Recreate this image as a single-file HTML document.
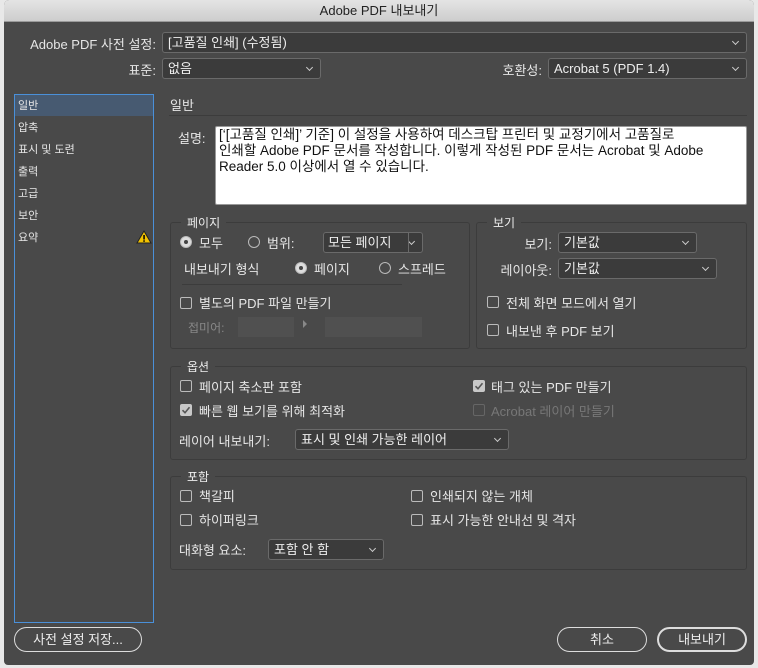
<!DOCTYPE html>
<html><head><meta charset="utf-8"><style>
*{box-sizing:border-box;margin:0;padding:0}
body{width:758px;height:668px;background:#e8e8e8;position:relative;overflow:hidden;font-family:"Liberation Sans","Noto Sans CJK KR","NanumGothic",sans-serif;font-size:12px;color:#e6e6e6}
.a{position:absolute;white-space:nowrap}
.r{position:absolute;white-space:nowrap;text-align:right}
#win{position:absolute;left:4px;top:0;width:750px;height:665px;background:#494949;border-radius:5px 5px 4px 4px;overflow:hidden}
#title{position:absolute;left:0;top:0;width:750px;height:22px;background:linear-gradient(#e4e4e4,#cdcdcd);border-bottom:1px solid #9a9a9a;color:#222;text-align:center;line-height:22px;font-size:13px}
.sel{position:absolute;height:21px;background:#3b3b3b;border:1px solid #6a6a6a;border-radius:3px;color:#eee;font-size:13px;line-height:19px;padding-left:5px}
.sel:after{content:"";position:absolute;right:8px;top:6px;width:4px;height:4px;border-right:1px solid #ccc;border-bottom:1px solid #ccc;transform:rotate(45deg)}
.fs{position:absolute;border:1px solid #3c3c3c;border-radius:3px}
.lg{position:absolute;background:#494949;padding:0 6px;font-size:12px;top:-9px;left:10px;color:#eee}
.cb{position:absolute;width:12px;height:12px;border:1px solid #bbb;border-radius:2px}
.ck{position:absolute;width:12px;height:12px;border-radius:2px;background:#c8c8c8}
.ck svg{position:absolute;left:0;top:0}
.rd{position:absolute;width:12px;height:12px;border:1px solid #bbb;border-radius:50%}
.rd.on:after{content:"";position:absolute;left:3px;top:3px;width:4px;height:4px;border-radius:50%;background:#444}
.rd.on{background:#ddd}
.btn{position:absolute;height:25px;border:1px solid #ddd;border-radius:13px;text-align:center;line-height:23px;font-size:13px;color:#eee}
.li{position:absolute;left:3px;font-size:11px}
</style></head><body>
<div id="win">
<div id="title">Adobe PDF 내보내기</div>
<div class="r" style="left:0;width:152px;top:34px;font-size:13px">Adobe PDF 사전 설정:</div>
<div class="sel" style="left:158px;top:32px;width:585px">[고품질 인쇄] (수정됨)</div>
<div class="r" style="left:0;width:152px;top:60px;font-size:13px">표준:</div>
<div class="sel" style="left:158px;top:58px;width:159px">없음</div>
<div class="r" style="left:400px;width:138px;top:60px;font-size:13px">호환성:</div>
<div class="sel" style="left:544px;top:58px;width:199px">Acrobat 5 (PDF 1.4)</div>

<div style="position:absolute;left:10px;top:94px;width:140px;height:529px;border:1px solid #4a90d9;background:#494949">
<div style="position:absolute;left:0;top:0;width:138px;height:21px;background:#475a71"></div>
<div class="li" style="top:2px">일반</div>
<div class="li" style="top:24px">압축</div>
<div class="li" style="top:46px">표시 및 도련</div>
<div class="li" style="top:68px">출력</div>
<div class="li" style="top:90px">고급</div>
<div class="li" style="top:112px">보안</div>
<div class="li" style="top:134px">요약</div>
<svg style="position:absolute;left:121px;top:135px" width="16" height="14"><path d="M8 1L15 13H1Z" fill="#f2c200" stroke="#222" stroke-width="1"/><rect x="7.3" y="5" width="1.5" height="4.5" fill="#000"/><rect x="7.3" y="10.3" width="1.5" height="1.5" fill="#000"/></svg>
</div>

<div class="a" style="left:166px;top:95px;font-size:13px">일반</div>
<div style="position:absolute;left:165px;top:115px;width:578px;height:1px;background:#3c3c3c"></div>
<div class="a" style="left:174px;top:128px;font-size:13px">설명:</div>
<div style="position:absolute;left:211px;top:126px;width:532px;height:79px;background:#fff;border:1px solid #999;border-radius:2px;color:#111;font-size:13.5px;line-height:16px;padding:0 3px;white-space:nowrap;overflow:hidden">[‘[고품질 인쇄]’ 기준] 이 설정을 사용하여 데스크탑 프린터 및 교정기에서 고품질로<br>인쇄할 Adobe PDF 문서를 작성합니다. 이렇게 작성된 PDF 문서는 Acrobat 및 Adobe<br>Reader 5.0 이상에서 열 수 있습니다.</div>

<div class="fs" style="left:166px;top:222px;width:300px;height:127px"><div class="lg">페이지</div></div>
<div class="rd on" style="left:176px;top:236px"></div><div class="a" style="left:195px;top:233px;font-size:13px">모두</div>
<div class="rd" style="left:244px;top:236px"></div><div class="a" style="left:263px;top:233px;font-size:13px">범위:</div>
<div class="sel" style="left:319px;top:232px;width:100px;padding-left:4px">모든 페이지</div>
<div style="position:absolute;left:404px;top:233px;width:1px;height:19px;background:#6a6a6a"></div>
<div class="a" style="left:180px;top:259px;font-size:13px">내보내기 형식</div>
<div class="rd on" style="left:291px;top:262px"></div><div class="a" style="left:310px;top:259px;font-size:13px">페이지</div>
<div class="rd" style="left:375px;top:262px"></div><div class="a" style="left:394px;top:259px;font-size:13px">스프레드</div>
<div style="position:absolute;left:178px;top:284px;width:220px;height:1px;background:#3c3c3c"></div>
<div class="cb" style="left:176px;top:297px"></div><div class="a" style="left:195px;top:293px;font-size:13px">별도의 PDF 파일 만들기</div>
<div class="a" style="left:184px;top:319px;font-size:12px;color:#888">접미어:</div>
<div style="position:absolute;left:234px;top:317px;width:56px;height:20px;background:#505050"></div>
<div style="position:absolute;left:299px;top:320px;width:0;height:0;border-left:4px solid #888;border-top:4px solid transparent;border-bottom:4px solid transparent"></div>
<div style="position:absolute;left:321px;top:317px;width:97px;height:20px;background:#505050"></div>

<div class="fs" style="left:472px;top:222px;width:271px;height:127px"><div class="lg">보기</div></div>
<div class="r" style="left:450px;width:98px;top:234px;font-size:13px">보기:</div>
<div class="sel" style="left:554px;top:232px;width:139px">기본값</div>
<div class="r" style="left:450px;width:98px;top:260px;font-size:13px">레이아웃:</div>
<div class="sel" style="left:554px;top:258px;width:159px">기본값</div>
<div class="cb" style="left:483px;top:296px"></div><div class="a" style="left:502px;top:293px;font-size:13px">전체 화면 모드에서 열기</div>
<div class="cb" style="left:483px;top:324px"></div><div class="a" style="left:502px;top:321px;font-size:13px">내보낸 후 PDF 보기</div>

<div class="fs" style="left:166px;top:366px;width:577px;height:94px"><div class="lg">옵션</div></div>
<div class="cb" style="left:176px;top:380px"></div><div class="a" style="left:195px;top:377px;font-size:13px">페이지 축소판 포함</div>
<div class="ck" style="left:176px;top:404px"><svg width="12" height="12"><path d="M2.5 6.2L5 8.7L9.5 3.3" fill="none" stroke="#555" stroke-width="1.6"/></svg></div><div class="a" style="left:195px;top:401px;font-size:13px">빠른 웹 보기를 위해 최적화</div>
<div class="ck" style="left:469px;top:380px"><svg width="12" height="12"><path d="M2.5 6.2L5 8.7L9.5 3.3" fill="none" stroke="#555" stroke-width="1.6"/></svg></div><div class="a" style="left:487px;top:377px;font-size:13px">태그 있는 PDF 만들기</div>
<div class="cb" style="left:469px;top:404px;border-color:#666"></div><div class="a" style="left:487px;top:401px;font-size:13px;color:#777">Acrobat 레이어 만들기</div>
<div class="a" style="left:175px;top:431px;font-size:13px">레이어 내보내기:</div>
<div class="sel" style="left:291px;top:429px;width:214px">표시 및 인쇄 가능한 레이어</div>

<div class="fs" style="left:166px;top:476px;width:577px;height:94px"><div class="lg">포함</div></div>
<div class="cb" style="left:176px;top:490px"></div><div class="a" style="left:195px;top:486px;font-size:13px">책갈피</div>
<div class="cb" style="left:176px;top:514px"></div><div class="a" style="left:195px;top:510px;font-size:13px">하이퍼링크</div>
<div class="cb" style="left:407px;top:490px"></div><div class="a" style="left:426px;top:486px;font-size:13px">인쇄되지 않는 개체</div>
<div class="cb" style="left:407px;top:514px"></div><div class="a" style="left:426px;top:510px;font-size:13px">표시 가능한 안내선 및 격자</div>
<div class="a" style="left:175px;top:540px;font-size:13px">대화형 요소:</div>
<div class="sel" style="left:264px;top:539px;width:116px">포함 안 함</div>

<div class="btn" style="left:10px;top:627px;width:128px">사전 설정 저장...</div>
<div class="btn" style="left:553px;top:627px;width:90px">취소</div>
<div class="btn" style="left:653px;top:627px;width:90px;border-width:2px;line-height:21px">내보내기</div>
</div>
</body></html>
